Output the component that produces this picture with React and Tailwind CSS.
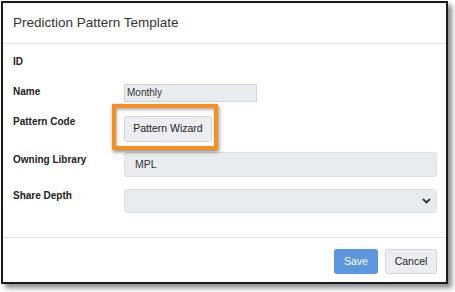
import React from "react";

const Row = ({ label, children, labelPt = "pt-[1px]" }) => (
  <div className="flex items-start">
    <div className={`w-[111px] shrink-0 font-bold text-[10px] leading-[14px] text-[#222] ${labelPt}`}>
      {label}
    </div>
    <div className="flex-1">{children}</div>
  </div>
);

const App = () => {
  return (
    <div
      className="w-[455px] h-[292px] bg-white pl-[1px] pt-[1px]"
      style={{ fontFamily: '"Liberation Sans", Arial, sans-serif' }}
    >
      <div className="w-[447px] h-[283px] border-2 border-[#1a1a1a] bg-white flex flex-col shadow-[4px_4px_5px_rgba(0,0,0,0.45)]">
        {/* header */}
        <div className="h-[41px] shrink-0 border-b border-[#e3e3e3] flex items-center pl-[10px]">
          <h1 className="text-[13.5px] text-[#333] leading-none">Prediction Pattern Template</h1>
        </div>

        {/* body */}
        <div className="flex-1 pl-[10px] pr-[9px] pt-[11px]">
          <div className="font-bold text-[10px] leading-[14px] text-[#222]">ID</div>

          <div className="mt-[15px]">
            <Row label="Name">
              <div className="w-[133px] h-[18px] bg-[#e9ecef] border border-[#ced4da] text-[10px] leading-[16px] pl-[2px] text-[#333]">
                Monthly
              </div>
            </Row>
          </div>

          <div className="mt-[13px]">
            <Row label="Pattern Code" labelPt="pt-0">
              <div className="relative w-[88px] h-[26px]">
                <button className="w-[88px] h-[26px] bg-[#eceef1] border border-[#d2d6da] rounded-[3px] text-[10.5px] text-[#222]">
                  Pattern Wizard
                </button>
                <div className="absolute left-[-12px] top-[-11px] w-[106px] h-[46px] border-[4px] border-[#f7901e] shadow-[1px_2px_4px_rgba(0,0,0,0.45),inset_1px_2px_3px_rgba(0,0,0,0.3)]" />
              </div>
            </Row>
          </div>

          <div className="mt-[11px]">
            <Row label="Owning Library">
              <div className="h-[25px] bg-[#e9ecef] border border-[#dfe2e5] rounded-[3px] flex items-center pl-[10px] text-[10.5px] text-[#333]">
                MPL
              </div>
            </Row>
          </div>

          <div className="mt-[12px]">
            <Row label="Share Depth" labelPt="pt-0">
              <div className="h-[24px] bg-[#e9ecef] border border-[#dfe2e5] rounded-[3px] flex items-center justify-end pr-[5px]">
                <svg width="9" height="6" viewBox="0 0 9 6">
                  <path d="M1 1l3.5 3.5L8 1" fill="none" stroke="#333" strokeWidth="1.8" />
                </svg>
              </div>
            </Row>
          </div>
        </div>

        {/* footer */}
        <div className="h-[45px] shrink-0 border-t border-[#e3e3e3] flex items-start justify-end gap-[7px] pr-[9px] pt-[11px]">
          <button className="w-[44px] h-[25px] bg-[#5b96de] rounded-[3px] text-white text-[10.5px]">Save</button>
          <button className="w-[52px] h-[25px] bg-[#eceef1] border border-[#d2d6da] rounded-[3px] text-[#222] text-[10.5px]">
            Cancel
          </button>
        </div>
      </div>
    </div>
  );
};

export default App;
